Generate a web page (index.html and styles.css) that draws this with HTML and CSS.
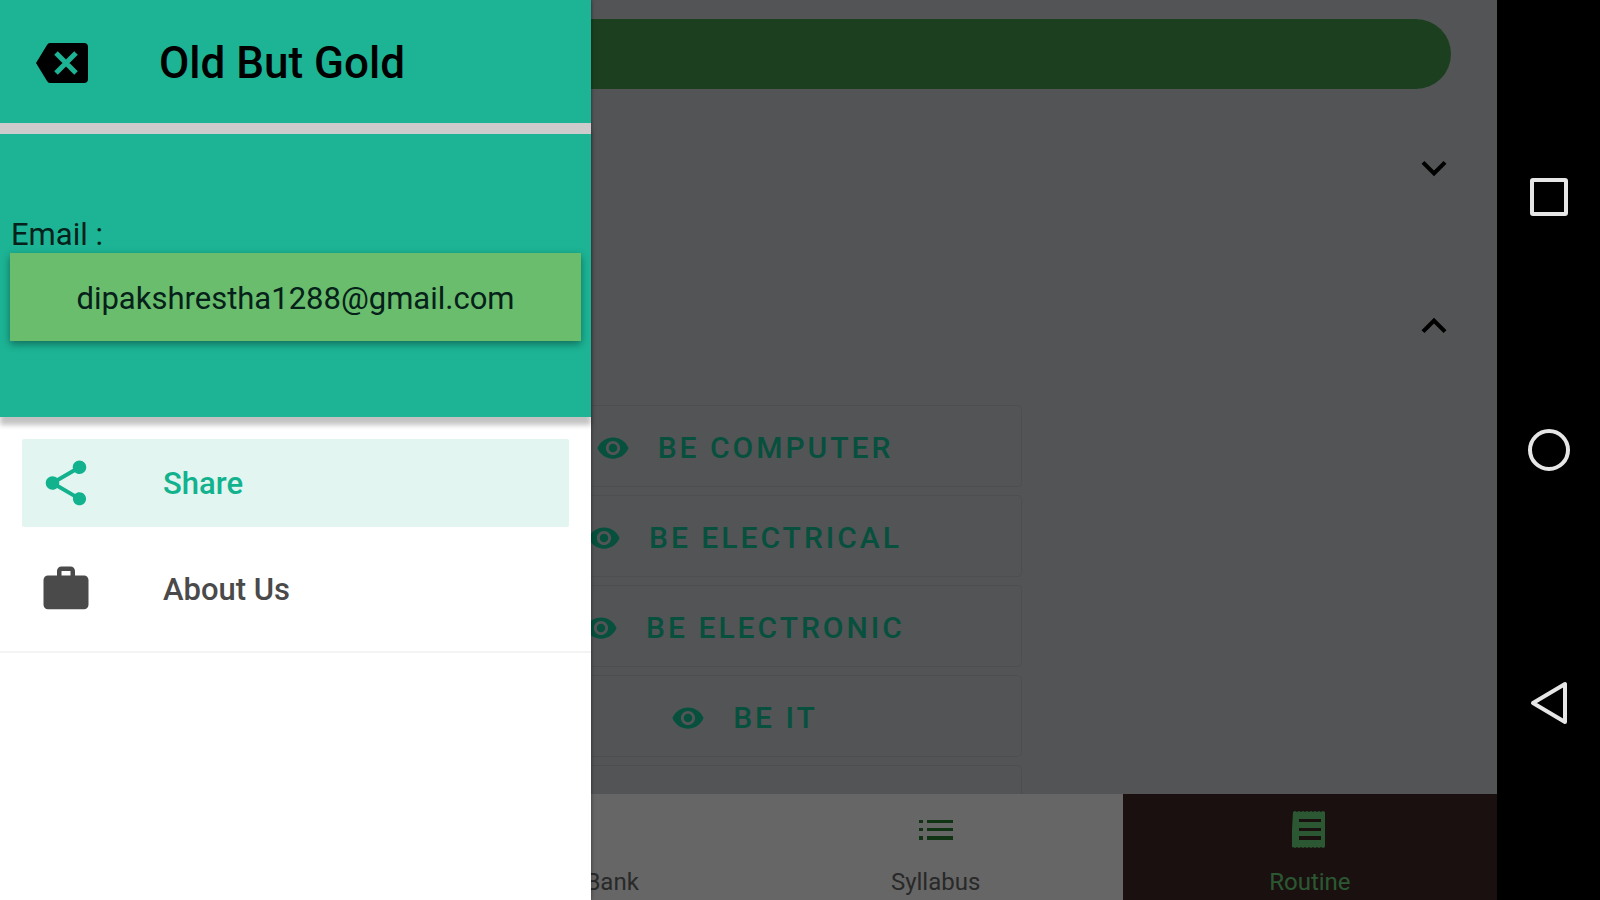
FILE: index.html
```html
<!DOCTYPE html>
<html lang="en">

<head>
  <meta charset="UTF-8">
  <meta name="viewport" content="width=device-width, initial-scale=1.0">
  <title>Old But Gold</title>
  <link rel="stylesheet" href="styles.css">
</head>

<body>
  <svg class="sprite">
    <symbol id="eye" viewBox="0 0 24 24">
      <path d="M12 4.500C7 4.500 2.730 7.610 1 12c1.730 4.390 6 7.500 11 7.500s9.270-3.110 11-7.500c-1.730-4.390-6-7.500-11-7.500zM12 17c-2.760 0-5-2.240-5-5s2.240-5 5-5 5 2.240 5 5-2.240 5-5 5zm0-8c-1.660 0-3 1.340-3 3s1.340 3 3 3 3-1.340 3-3-1.340-3-3-3z" />
    </symbol>
  </svg>

  <div class="app">
    <main class="content">
      <div class="banner"></div>
      <button class="section" aria-label="Expand section">
        <svg viewBox="0 0 24 24"><path d="M7.410 8.590L12 13.170l4.590-4.580L18 10l-6 6-6-6z" /></svg>
      </button>
      <button class="section" aria-label="Collapse section">
        <svg viewBox="0 0 24 24"><path d="M7.410 15.410L12 10.830l4.590 4.580L18 14l-6-6-6 6z" /></svg>
      </button>
      <div class="branches">
        <button><svg><use href="#eye" /></svg>BE COMPUTER</button>
        <button><svg><use href="#eye" /></svg>BE ELECTRICAL</button>
        <button><svg><use href="#eye" /></svg>BE ELECTRONIC</button>
        <button><svg><use href="#eye" /></svg>BE IT</button>
        <button aria-label="More"></button>
      </div>
    </main>

    <nav class="tabs">
      <button aria-label="Home"></button>
      <button><svg></svg>Question Bank</button>
      <button>
        <svg class="list-icon" viewBox="0 0 34 44">
          <path d="M0 12h4v3H0zM8 12h26v3H8zM0 20h4v3H0zM8 20h26v3H8zM0 28h4v4H0zM8 28h26v4H8z" />
        </svg>
        Syllabus
      </button>
      <button class="active">
        <svg viewBox="0 0 34 44">
          <path fill-rule="evenodd" d="M0 4l2-1 2 1 2-1 2 1 2-1 2 1 2-1 2 1 2-1 2 1 2-1 2 1 2-1 2 1 2-1 2 1v35l-2 1-2-1-2 1-2-1-2 1-2-1-2 1-2-1-2 1-2-1-2 1-2-1-2 1-2-1-2 1-2-1-2 1zM6 11v3h22v-3zM6 20v3h22v-3zM6 28v4h22v-4z" />
        </svg>
        Routine
      </button>
    </nav>

    <div class="scrim"></div>

    <aside class="drawer">
      <header class="drawer-header">
        <button aria-label="Close menu">
          <svg viewBox="0 0 52 40">
            <path d="M14 0h34q4 0 4 4v32q0 4-4 4H14q-2 0-3-2L0 20 11 2q1-2 3-2z" />
            <path class="cross" d="M20 10l20 20M40 10L20 30" />
          </svg>
        </button>
        <h1>Old But Gold</h1>
      </header>
      <section class="account">
        <span>Email :</span>
        <div class="email">dipakshrestha1288@gmail.com</div>
      </section>
      <nav class="menu">
        <a href="#share" class="selected">
          <svg viewBox="0 0 24 24">
            <path d="M18 16.080c-.760 0-1.440.300-1.960.770L8.910 12.700c.050-.230.090-.460.090-.700s-.040-.470-.090-.700l7.050-4.110c.540.500 1.250.810 2.040.810 1.660 0 3-1.340 3-3s-1.340-3-3-3-3 1.340-3 3c0 .240.040.470.090.700L8.040 9.810C7.500 9.310 6.790 9 6 9c-1.660 0-3 1.340-3 3s1.340 3 3 3c.790 0 1.500-.310 2.040-.810l7.120 4.160c-.050.210-.080.430-.080.650 0 1.610 1.310 2.920 2.920 2.920s2.920-1.310 2.920-2.920-1.310-2.920-2.920-2.920z" />
          </svg>
          Share
        </a>
        <a href="#about">
          <svg viewBox="0 0 24 24">
            <path d="M20 6h-4V4c0-1.110-.890-2-2-2h-4c-1.110 0-2 .890-2 2v2H4c-1.110 0-2 .890-2 2v11c0 1.110.890 2 2 2h16c1.110 0 2-.890 2-2V8c0-1.110-.890-2-2-2zm-6 0h-4V4h4v2z" />
          </svg>
          About Us
        </a>
      </nav>
    </aside>
  </div>

  <div class="system-bar">
    <button aria-label="Recent apps">
      <svg viewBox="0 0 44 44"><rect x="5" y="5" width="34" height="34" rx="1" /></svg>
    </button>
    <button aria-label="Home screen">
      <svg viewBox="0 0 44 44"><circle cx="22" cy="22" r="19" /></svg>
    </button>
    <button aria-label="Back">
      <svg viewBox="0 0 44 44"><path d="M38 3v38L6 22z" /></svg>
    </button>
  </div>
</body>

</html>
```
FILE: styles.css
```css
* {
  box-sizing: border-box;
}

body {
  margin: 0;
  display: flex;
  height: 100vh;
  overflow: hidden;
  background: #000;
  font-family: Roboto, sans-serif;
}

button {
  border: 0;
  padding: 0;
  background: none;
  font-family: inherit;
  cursor: pointer;
}

svg {
  flex-shrink: 0;
  fill: currentColor;
}

.sprite {
  display: none;
}

.app {
  flex: 1;
  position: relative;
  display: flex;
  flex-direction: column;
  background: #d0d2d7;
}

/* page behind the drawer */
.content {
  flex: 1;
  min-height: 0;
  overflow: hidden;
  padding: 19px 46px 0;
}

.banner {
  height: 70px;
  border-radius: 35px;
  background: #46a04e;
}

.section {
  display: flex;
  align-items: center;
  justify-content: flex-end;
  width: 100%;
  height: 158px;
  color: #000;
}

.section svg {
  width: 50px;
  height: 50px;
  margin-right: -8px;
}

.branches {
  display: flex;
  flex-direction: column;
  align-items: center;
  gap: 8px;
}

.branches button {
  display: flex;
  align-items: center;
  justify-content: center;
  gap: 28px;
  width: 546px;
  height: 82px;
  padding: 3px 8px 0 0;
  border: 1px solid #c0c3c8;
  border-radius: 4px;
  color: #0fc799;
  font-size: 30px;
  font-weight: 500;
  letter-spacing: 3px;
}

.branches svg {
  width: 34px;
  height: 34px;
}

.tabs {
  display: grid;
  grid-template-columns: repeat(4, 1fr);
  height: 106px;
  background: #fff;
}

.tabs button {
  display: flex;
  flex-direction: column;
  align-items: center;
  justify-content: flex-end;
  gap: 16px;
  padding-bottom: 4px;
  color: #666;
  font-size: 24px;
  line-height: 28px;
}

.tabs svg {
  width: 36px;
  height: 44px;
}

.tabs .list-icon {
  fill: #2a8030;
}

.tabs .active {
  background: #432a26;
  color: #6cdc80;
}

.scrim {
  position: absolute;
  inset: 0;
  background: rgba(0, 0, 0, 0.6);
}

/* drawer */
.drawer {
  position: absolute;
  top: 0;
  bottom: 0;
  left: 0;
  width: 591px;
  background: #fff;
  box-shadow: 0 0 4px rgba(0, 0, 0, 0.5);
}

.drawer-header {
  display: flex;
  align-items: center;
  gap: 70px;
  height: 123px;
  padding: 3px 0 0 35px;
  background: #1cb495;
}

.drawer-header svg {
  display: block;
  width: 54px;
  height: 40px;
}

.drawer-header .cross {
  stroke: #1cb495;
  stroke-width: 5;
}

.drawer-header h1 {
  margin: 0;
  font-size: 44px;
  font-weight: 500;
}

.account {
  height: 294px;
  padding: 83px 10px 0;
  border-top: 11px solid #cdcbcb;
  background: #1cb495;
  box-shadow: 0 8px 5px rgba(0, 0, 0, 0.24);
  color: #06201a;
  font-size: 31px;
  line-height: 36px;
}

.account span {
  padding-left: 1px;
}

.email {
  display: flex;
  align-items: center;
  justify-content: center;
  height: 88px;
  padding-top: 4px;
  background: #69bd6c;
  box-shadow: 0 3px 8px rgba(0, 0, 0, 0.4);
}

.menu {
  display: grid;
  gap: 18px;
  padding: 22px 22px 18px;
  border-bottom: 2px solid #f3f3f3;
}

.menu a {
  display: flex;
  align-items: center;
  gap: 70px;
  height: 88px;
  padding-left: 17px;
  border-radius: 2px;
  color: #4a4a4a;
  font-size: 31px;
  font-weight: 500;
  text-decoration: none;
}

.menu svg {
  width: 54px;
  height: 54px;
}

.menu .selected {
  background: #e2f5f0;
  color: #12b28e;
}

/* android navigation keys */
.system-bar {
  display: flex;
  flex-direction: column;
  justify-content: space-around;
  align-items: center;
  width: 103px;
  padding: 70px 0;
}

.system-bar svg {
  display: block;
  width: 44px;
  height: 44px;
  fill: none;
  stroke: #e6e6e6;
  stroke-width: 4;
  stroke-linejoin: round;
}
```
